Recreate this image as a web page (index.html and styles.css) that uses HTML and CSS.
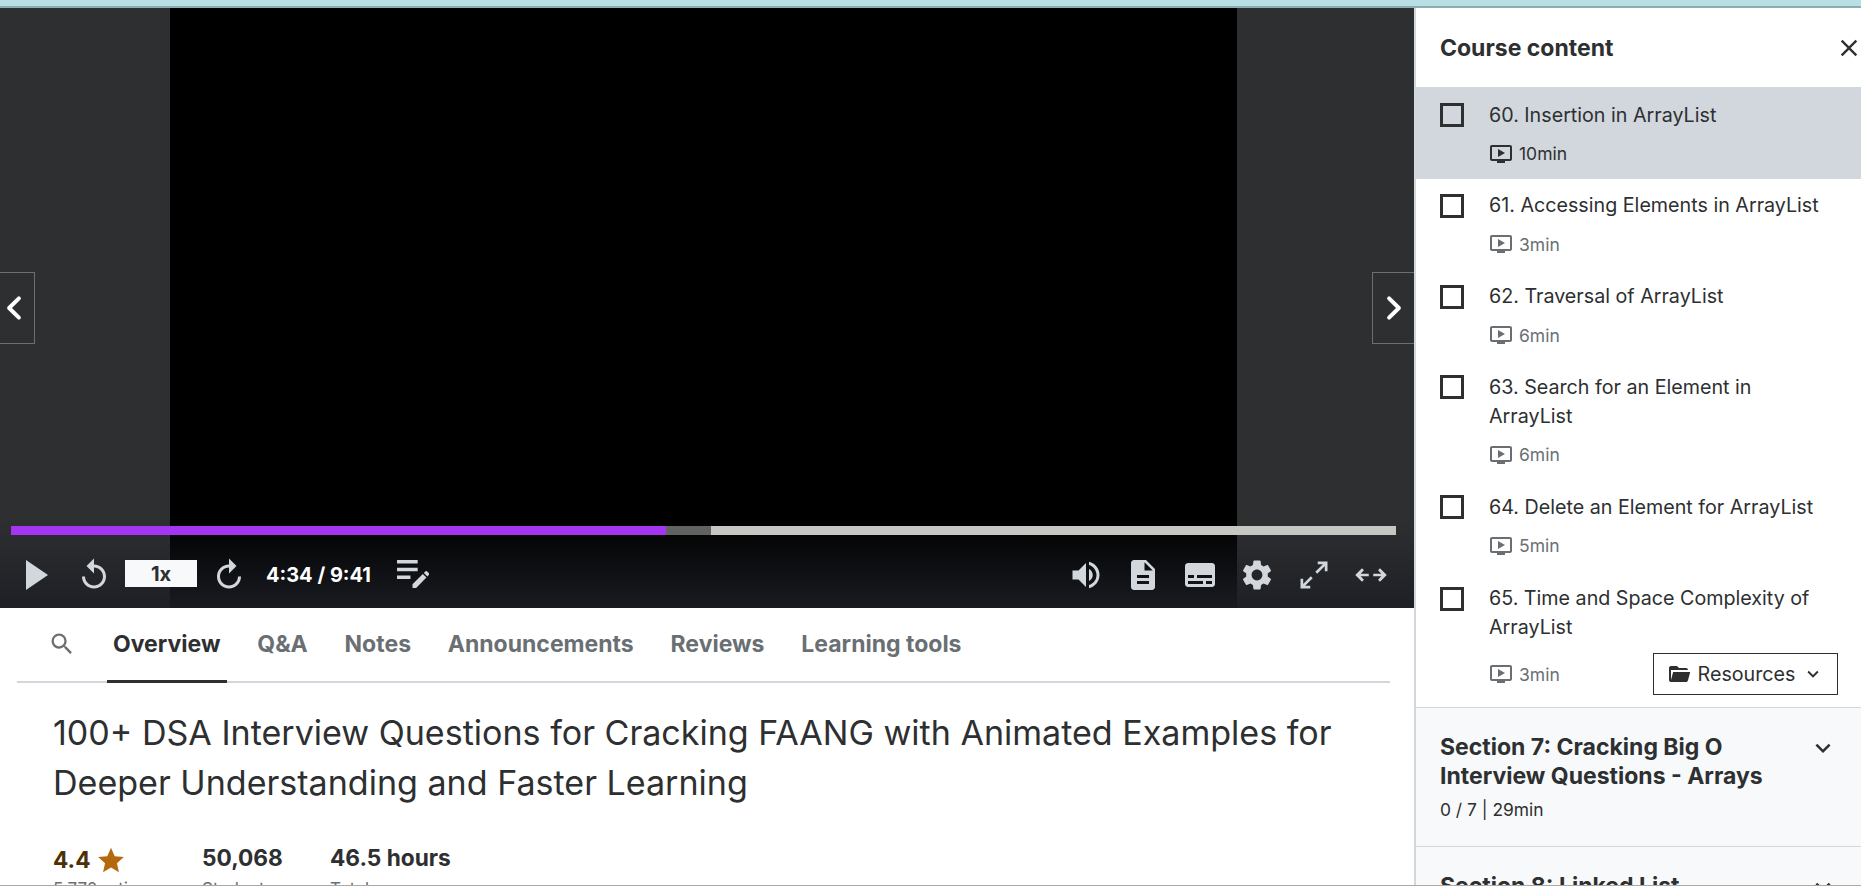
FILE: index.html
```html
<!DOCTYPE html>
<html lang="en">
<head>
<meta charset="utf-8">
<title>Course player</title>
<link rel="stylesheet" href="styles.css">
</head>
<body>
<svg class="sprite" aria-hidden="true">
  <symbol id="i-search" viewBox="0 0 24 24"><path d="M15.5 14h-.79l-.28-.27A6.471 6.471 0 0 0 16 9.5 6.5 6.5 0 1 0 9.5 16c1.61 0 3.09-.59 4.23-1.57l.27.28v.79l5 4.99L20.49 19l-4.99-5zm-6 0C7.01 14 5 11.99 5 9.5S7.01 5 9.5 5 14 7.01 14 9.5 11.99 14 9.5 14z"/></symbol>
  <symbol id="i-replay" viewBox="0 0 24 24"><path d="M12 5V1L7 6l5 5V7c3.31 0 6 2.69 6 6s-2.69 6-6 6-6-2.69-6-6H4c0 4.42 3.58 8 8 8s8-3.58 8-8-3.58-8-8-8z"/></symbol>
  <symbol id="i-forward" viewBox="0 0 24 24"><path d="M12 5V1l5 5-5 5V7c-3.31 0-6 2.69-6 6s2.69 6 6 6 6-2.69 6-6h2c0 4.42-3.58 8-8 8s-8-3.58-8-8 3.58-8 8-8z"/></symbol>
  <symbol id="i-play" viewBox="0 0 24 30"><path d="M1 0v30l22-15z"/></symbol>
  <symbol id="i-notes" viewBox="0 0 32 32"><path d="M1 2h20v3.400H1zM1 9.500h20v3.400H1zM1 17h13v3.400H1z"/><path d="M16 29v-3.500L26 15.500l3.500 3.500L19.500 29zM27 14.500l1.600-1.600a1 1 0 0 1 1.400 0l2 2a1 1 0 0 1 0 1.400L30.500 18z"/></symbol>
  <symbol id="i-volume" viewBox="0 0 24 24"><path d="M3 9v6h4l5 5V4L7 9H3zm13.500 3c0-1.770-1.020-3.290-2.500-4.030v8.050c1.480-.73 2.500-2.250 2.500-4.020zM14 3.230v2.060c2.890.86 5 3.540 5 6.710s-2.110 5.850-5 6.710v2.060c4.010-.91 7-4.490 7-8.770s-2.990-7.860-7-8.770z"/></symbol>
  <symbol id="i-doc" viewBox="0 0 24 24"><path d="M14 2H6c-1.100 0-1.990.9-1.990 2L4 20c0 1.100.89 2 1.990 2H18c1.100 0 2-.9 2-2V8l-6-6zm2 16H8v-2h8v2zm0-4H8v-2h8v2zm-3-5V3.500L18.500 9H13z"/></symbol>
  <symbol id="i-subs" viewBox="0 0 24 24"><path d="M20 4H4c-1.100 0-2 .9-2 2v12c0 1.100.9 2 2 2h16c1.100 0 2-.9 2-2V6c0-1.100-.9-2-2-2zM4 12h4v2H4v-2zm10 6H4v-2h10v2zm6 0h-4v-2h4v2zm0-4H10v-2h10v2z"/></symbol>
  <symbol id="i-gear" viewBox="0 0 24 24"><path d="M19.140 12.940c.04-.3.06-.61.06-.94 0-.32-.02-.64-.07-.94l2.030-1.580c.18-.14.23-.41.12-.61l-1.920-3.320c-.12-.22-.37-.29-.59-.22l-2.390.96c-.5-.38-1.030-.7-1.620-.94l-.36-2.540c-.04-.24-.24-.41-.48-.41h-3.840c-.24 0-.43.17-.47.41l-.36 2.540c-.59.24-1.130.57-1.620.94l-2.390-.96c-.22-.08-.47 0-.59.22L2.740 8.870c-.12.21-.08.47.12.61l2.030 1.580c-.05.3-.09.63-.09.94s.02.64.07.94l-2.030 1.580c-.18.14-.23.41-.12.61l1.920 3.320c.12.22.37.29.59.22l2.390-.96c.5.38 1.030.7 1.620.94l.36 2.540c.05.24.24.41.48.41h3.840c.24 0 .44-.17.47-.41l.36-2.540c.59-.24 1.130-.56 1.620-.94l2.390.96c.22.08.47 0 .59-.22l1.920-3.320c.12-.22.07-.47-.12-.61l-2.010-1.580zM12 15.600c-1.980 0-3.600-1.620-3.600-3.600s1.620-3.600 3.600-3.600 3.600 1.620 3.600 3.600-1.620 3.600-3.600 3.600z"/></symbol>
  <symbol id="i-full" viewBox="0 0 24 24"><path fill="none" stroke="#d1d7dc" stroke-width="1.800" d="M14.500 3.900H20.100V9.500M20.100 3.900L13.500 10.500M9.500 20.100H3.900V14.500M3.900 20.100L10.500 13.500"/></symbol>
  <symbol id="i-wide" viewBox="0 0 24 24"><path d="M6 7.500l1.300 1.300-2.200 2.300h5.400v1.800H5.100l2.200 2.300L6 16.500 1.500 12zM18 7.500l-1.300 1.300 2.200 2.300h-5.400v1.800h5.400l-2.200 2.300 1.300 1.300 4.500-4.500z"/></symbol>
  <symbol id="i-close" viewBox="0 0 24 24"><path d="M19 6.410L17.590 5 12 10.590 6.410 5 5 6.410 10.590 12 5 17.590 6.410 19 12 13.410 17.590 19 19 17.590 13.410 12z"/></symbol>
  <symbol id="i-video" viewBox="0 0 24 24"><path d="M21 3H3c-1.100 0-2 .9-2 2v12c0 1.100.9 2 2 2h5v2h8v-2h5c1.100 0 2-.9 2-2V5c0-1.100-.9-2-2-2zm0 14H3V5h18v12zM16 11l-7 4V7z"/></symbol>
  <symbol id="i-folder" viewBox="0 0 24 24"><path d="M19 20H4c-1.110 0-2-.9-2-2V6c0-1.110.89-2 2-2h6l2 2h7c1.100 0 2 .9 2 2H4v10l2.140-8h17.070l-2.280 8.500c-.23.870-1.010 1.500-1.930 1.500z"/></symbol>
  <symbol id="i-down" viewBox="0 0 24 24"><path d="M16.590 8.590L12 13.170 7.410 8.590 6 10l6 6 6-6z"/></symbol>
  <symbol id="i-star" viewBox="0 0 24 24"><path d="M12 1.500l3.200 7.200 7.800.8-5.900 5.200 1.700 7.700L12 18.400l-6.800 4 1.700-7.700L1 9.500l7.800-.8z"/></symbol>
  <symbol id="i-left" viewBox="0 0 24 24"><path fill="none" stroke="#fff" stroke-width="3.400" stroke-linecap="round" stroke-linejoin="round" d="M16.200 3.800L7.800 12l8.400 8.200"/></symbol>
  <symbol id="i-right" viewBox="0 0 24 24"><path fill="none" stroke="#fff" stroke-width="3.400" stroke-linecap="round" stroke-linejoin="round" d="M7.800 3.800L16.200 12l-8.400 8.200"/></symbol>
</svg>

<div class="topband"></div>
<div class="app">
  <main class="left">
    <section class="video">
      <div class="screen"></div>
      <div class="shade"></div>
      <button class="nav nav-left"><svg class="nav-ico"><use href="#i-left"/></svg></button>
      <button class="nav nav-right"><svg class="nav-ico"><use href="#i-right"/></svg></button>
      <div class="controls">
        <div class="progress">
          <div class="played"></div>
          <div class="buffered"></div>
        </div>
        <div class="bar">
          <div class="bar-group">
            <svg class="ico play"><use href="#i-play"/></svg>
            <svg class="ico replay"><use href="#i-replay"/></svg>
            <span class="rate">1x</span>
            <svg class="ico forward"><use href="#i-forward"/></svg>
            <span class="time">4:34 / 9:41</span>
            <svg class="ico notes"><use href="#i-notes"/></svg>
          </div>
          <div class="bar-group right-group">
            <svg class="ico"><use href="#i-volume"/></svg>
            <svg class="ico"><use href="#i-doc"/></svg>
            <svg class="ico"><use href="#i-subs"/></svg>
            <svg class="ico"><use href="#i-gear"/></svg>
            <svg class="ico"><use href="#i-full"/></svg>
            <svg class="ico"><use href="#i-wide"/></svg>
          </div>
        </div>
      </div>
    </section>

    <nav class="tabs">
      <svg class="tab-search"><use href="#i-search"/></svg>
      <a class="tab active">Overview</a>
      <a class="tab">Q&amp;A</a>
      <a class="tab">Notes</a>
      <a class="tab">Announcements</a>
      <a class="tab">Reviews</a>
      <a class="tab">Learning tools</a>
    </nav>

    <section class="about">
      <h1 class="title">100+ DSA Interview Questions for Cracking FAANG with Animated Examples for Deeper Understanding and Faster Learning</h1>
      <div class="stats">
        <div class="stat stat-rating">
          <div class="stat-num rating">4.4 <svg class="star"><use href="#i-star"/></svg></div>
          <div class="stat-label">5,770 ratings</div>
        </div>
        <div class="stat stat-students">
          <div class="stat-num">50,068</div>
          <div class="stat-label">Students</div>
        </div>
        <div class="stat">
          <div class="stat-num">46.5 hours</div>
          <div class="stat-label">Total</div>
        </div>
      </div>
    </section>
  </main>

  <aside class="side">
    <header class="side-head">
      <h2 class="side-title">Course content</h2>
      <svg class="side-close"><use href="#i-close"/></svg>
    </header>
    <ul class="lessons">
      <li class="lesson current">
        <span class="check"></span>
        <div class="lesson-body">
          <div class="lesson-name">60. Insertion in ArrayList</div>
          <div class="lesson-meta"><svg class="vid"><use href="#i-video"/></svg><span>10min</span></div>
        </div>
      </li>
      <li class="lesson">
        <span class="check"></span>
        <div class="lesson-body">
          <div class="lesson-name">61. Accessing Elements in ArrayList</div>
          <div class="lesson-meta"><svg class="vid"><use href="#i-video"/></svg><span>3min</span></div>
        </div>
      </li>
      <li class="lesson">
        <span class="check"></span>
        <div class="lesson-body">
          <div class="lesson-name">62. Traversal of ArrayList</div>
          <div class="lesson-meta"><svg class="vid"><use href="#i-video"/></svg><span>6min</span></div>
        </div>
      </li>
      <li class="lesson">
        <span class="check"></span>
        <div class="lesson-body">
          <div class="lesson-name">63. Search for an Element in ArrayList</div>
          <div class="lesson-meta"><svg class="vid"><use href="#i-video"/></svg><span>6min</span></div>
        </div>
      </li>
      <li class="lesson">
        <span class="check"></span>
        <div class="lesson-body">
          <div class="lesson-name">64. Delete an Element for ArrayList</div>
          <div class="lesson-meta"><svg class="vid"><use href="#i-video"/></svg><span>5min</span></div>
        </div>
      </li>
      <li class="lesson">
        <span class="check"></span>
        <div class="lesson-body">
          <div class="lesson-name">65. Time and Space Complexity of ArrayList</div>
          <div class="lesson-meta">
            <svg class="vid"><use href="#i-video"/></svg><span>3min</span>
            <button class="resources"><svg class="res-folder"><use href="#i-folder"/></svg>Resources<svg class="res-down"><use href="#i-down"/></svg></button>
          </div>
        </div>
      </li>
    </ul>
    <div class="section-row">
      <div class="section-text">
        <h3 class="section-name">Section 7: Cracking Big O Interview Questions - Arrays</h3>
        <div class="section-meta">0 / 7 | 29min</div>
      </div>
      <svg class="section-down"><use href="#i-down"/></svg>
    </div>
    <div class="section-row">
      <div class="section-text">
        <h3 class="section-name">Section 8: Linked List</h3>
      </div>
      <svg class="section-down"><use href="#i-down"/></svg>
    </div>
  </aside>
</div>
<div class="bottom-line"></div>
</body>
</html>
```

FILE: styles.css
```css
* { box-sizing: border-box; }
html, body { margin: 0; padding: 0; height: 886px; overflow: hidden; background: #fff; }
body { font-family: "Inter", "Liberation Sans", sans-serif; color: #2d2f31; display: flex; flex-direction: column; }
.sprite { display: none; }

.topband { height: 8px; flex: none; background: #b8e0e4; border-bottom: 2px solid #8cacaf; }
.app { flex: 1; min-height: 0; display: flex; overflow: hidden; }
.bottom-line { height: 1px; flex: none; background: #a9a9a9; }

.left { width: 1414px; flex: none; overflow: hidden; }

.video { position: relative; height: 600px; background: #2d2f31; display: flex; flex-direction: column; justify-content: flex-end; }
.screen { position: absolute; top: 0; bottom: 0; left: 170px; width: 1067px; background: #000; }
.shade { position: absolute; left: 0; right: 0; bottom: 0; height: 90px; background: linear-gradient(to bottom, rgba(28,29,31,0), rgba(28,30,36,.9)); }
.nav { position: absolute; top: 264px; width: 42px; height: 72px; padding: 0; background: #2d2f31; border: 1px solid #6a6f73; display: flex; align-items: center; justify-content: center; }
.nav-left { left: 0; width: 35px; border-left: 0; padding-right: 7px; }
.nav-right { right: 0; border-right: 0; }
.nav-ico { width: 28px; height: 28px; flex: none; }

.controls { position: relative; padding: 0 18px 0 11px; }
.progress { position: relative; height: 9px; background: #c6c7c2; }
.played { position: absolute; left: 0; top: 0; bottom: 0; width: 655px; background: #a435f0; }
.buffered { position: absolute; left: 655px; top: 0; bottom: 0; width: 45px; background: #616363; }
.bar { height: 73px; padding-top: 6px; display: flex; align-items: center; justify-content: space-between; }
.bar-group { display: flex; align-items: center; }
.right-group { gap: 21px; margin-right: 7px; }
.ico { width: 36px; height: 36px; fill: #d1d7dc; flex: none; }
.play { width: 24px; height: 30px; margin-left: 14px; }
.replay { margin-left: 27px; }
.rate { width: 72px; height: 27px; margin: 0 0 2px 13px; background: #f7f9fa; color: #2d2f31; font-size: 20px; font-weight: 700; display: flex; align-items: center; justify-content: center; }
.forward { margin-left: 14px; }
.time { margin-left: 19px; color: #fff; font-size: 20px; font-weight: 700; white-space: nowrap; }
.notes { width: 33px; height: 33px; margin-left: 25px; }

.tabs { height: 75px; margin: 0 24px 0 17px; padding-bottom: 1px; display: flex; align-items: stretch; border-bottom: 2px solid #d1d7dc; }
.tab-search { width: 28px; height: 28px; fill: #6a6f73; align-self: center; margin: 0 31px 0 31px; flex: none; }
.tab { padding: 0 6px; margin-right: 24.8px; display: flex; align-items: center; font-size: 23px; font-weight: 700; color: #6a6f73; white-space: nowrap; }
.tab.active { color: #2d2f31; border-bottom: 3px solid #2d2f31; margin-bottom: -3px; padding-bottom: 1px; }

.about { padding: 0 53px; }
.title { margin: 25px 0 0; font-size: 34.06px; font-weight: 400; line-height: 50px; color: #2d2f31; }
.stats { display: flex; margin-top: 35px; }
.stat { flex: none; }
.stat-rating { width: 149px; }
.stat-students { width: 128px; }
.stat-num { font-size: 22.7px; font-weight: 700; line-height: 29px; white-space: nowrap; }
.rating { color: #4d3105; display: flex; align-items: center; gap: 6px; margin-top: 2px; margin-bottom: -2px; }
.star { width: 28px; height: 28px; fill: #b4690e; }
.stat-label { font-size: 17px; color: #6a6f73; line-height: 24px; margin-top: 5px; }

.side { flex: 1; min-width: 0; border-left: 2px solid #d1d7dc; overflow: hidden; }
.side-head { height: 80px; display: flex; align-items: center; justify-content: space-between; padding: 0 0 0 24px; border-bottom: 1px solid #d1d7dc; }
.side-title { margin: 0; font-size: 23px; font-weight: 700; }
.side-close { width: 28px; height: 28px; fill: #2d2f31; margin-right: -2px; flex: none; }
.lessons { list-style: none; margin: 0; padding: 0; }
.lesson { display: flex; padding: 12.500px 23px 9.250px 24px; }
.lesson:last-child { padding-top: 13.250px; padding-bottom: 8.500px; }
.lesson.current { background: #d1d7dc; }
.check { width: 24px; height: 24px; flex: none; border: 3px solid #2d2f31; margin: 2.500px 25px 0 0; }
.lesson-body { flex: 1; min-width: 0; }
.lesson-name { font-size: 19.7px; line-height: 29px; color: #2d2f31; }
.lesson-meta { display: flex; align-items: center; margin-top: 8px; min-height: 32px; font-size: 17.5px; color: #6a6f73; }
.current .lesson-meta { color: #2d2f31; }
.vid { width: 24px; height: 24px; fill: currentColor; flex: none; margin-right: 6px; }
.resources { margin: 3px 0 3px auto; height: 42px; width: 185px; padding: 0 13px; display: flex; align-items: center; justify-content: space-between; background: #fff; border: 1px solid #2d2f31; font: 400 19.7px "Inter", "Liberation Sans", sans-serif; color: #2d2f31; }
.res-folder { width: 24px; height: 24px; fill: #2d2f31; flex: none; }
.res-down { width: 22px; height: 22px; fill: #2d2f31; flex: none; }
.section-row { display: flex; justify-content: space-between; padding: 25px 23px 24px 24px; background: #f7f9fa; border-top: 1px solid #d1d7dc; min-height: 138px; }
.section-text { max-width: 330px; }
.section-name { margin: 0; font-size: 23px; font-weight: 700; line-height: 29px; }
.section-meta { font-size: 17.4px; margin-top: 7px; line-height: 24px; }
.section-down { width: 30px; height: 30px; fill: #2d2f31; flex: none; }
```
